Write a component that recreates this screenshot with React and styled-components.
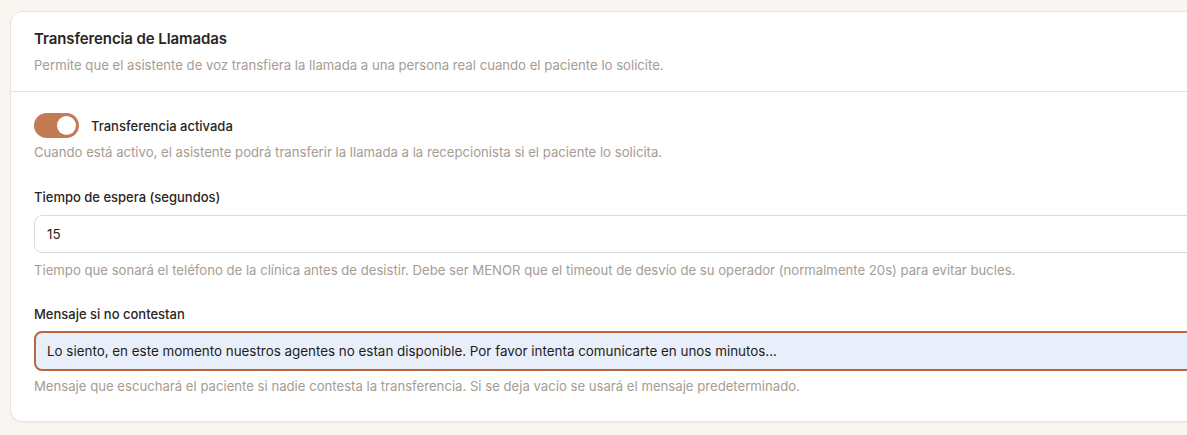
import React, { useState } from "react";
import styled, { createGlobalStyle } from "styled-components";

const Global = createGlobalStyle`
  html, body { margin: 0; padding: 0; background: #f9f6f1; }
  body { font-family: "Inter", "Noto Sans", sans-serif; -webkit-font-smoothing: antialiased; }
  * { box-sizing: border-box; }
`;

const Page = styled.div`
  padding: 11px 0 0 10px;
  width: 1187px;
  height: 435px;
  overflow: hidden;
`;

const Card = styled.section`
  width: 1260px;
  background: #ffffff;
  border: 1px solid #e7e3de;
  border-radius: 12px;
  box-shadow: 0 1px 2px rgba(60, 40, 20, 0.06);
`;

const Header = styled.header`
  padding: 17px 23px 17px;
  border-bottom: 1px solid #e6e1db;
  display: flex;
  flex-direction: column;
  gap: 7px;
`;

const Title = styled.h2`
  margin: 0;
  font-size: 15px;
  line-height: 20px;
  font-weight: 600;
  color: #2a2522;
  letter-spacing: -0.1px;
`;

const Helper = styled.p`
  margin: 0;
  font-size: 13.15px;
  line-height: 18px;
  color: #a69c93;
  margin-top: ${(p) => p.$mt || 0}px;
`;

const Body = styled.div`
  padding: 21px 23px 26px;
  display: flex;
  flex-direction: column;
`;

const Field = styled.div`
  display: flex;
  flex-direction: column;
  margin-top: ${(p) => p.$mt || 0}px;
`;

const ToggleRow = styled.label`
  display: flex;
  align-items: center;
  gap: 12px;
  cursor: pointer;
`;

const Switch = styled.span`
  width: 45px;
  height: 25px;
  border-radius: 13px;
  background: ${(p) => (p.$on ? "#c47a52" : "#d9d3cc")};
  display: flex;
  align-items: center;
  justify-content: ${(p) => (p.$on ? "flex-end" : "flex-start")};
  padding: 0 3px;
`;

const Knob = styled.span`
  width: 19px;
  height: 19px;
  border-radius: 50%;
  background: #ffffff;
`;

const ToggleLabel = styled.span`
  font-size: 13px;
  color: #2a2522;
  font-weight: 500;
`;

const Label = styled.label`
  font-size: 13px;
  line-height: 18px;
  font-weight: 500;
  color: #2a2522;
  margin-bottom: ${(p) => p.$mb || 10}px;
`;

const Input = styled.input`
  width: 100%;
  height: ${(p) => (p.$focused ? 40 : 38)}px;
  border-radius: 8px;
  border: ${(p) => (p.$focused ? "2px solid #b8673f" : "1px solid #dedad5")};
  background: ${(p) => (p.$focused ? "#e8effb" : "#ffffff")};
  padding: 0 ${(p) => (p.$focused ? 11 : 12)}px;
  font-family: inherit;
  font-size: 13.4px;
  color: #1f1b18;
  outline: none;
  margin-bottom: ${(p) => (p.$focused ? 6 : 8)}px;
`;

export default function App() {
  const [on, setOn] = useState(true);
  const [wait, setWait] = useState("15");
  const [msg, setMsg] = useState(
    "Lo siento, en este momento nuestros agentes no estan disponible. Por favor intenta comunicarte en unos minutos..."
  );
  return (
    <>
      <Global />
      <Page>
        <Card>
          <Header>
            <Title>Transferencia de Llamadas</Title>
            <Helper>
              Permite que el asistente de voz transfiera la llamada a una persona real cuando el paciente lo solicite.
            </Helper>
          </Header>
          <Body>
            <Field>
              <ToggleRow onClick={() => setOn(!on)}>
                <Switch $on={on}>
                  <Knob />
                </Switch>
                <ToggleLabel>Transferencia activada</ToggleLabel>
              </ToggleRow>
              <Helper $mt={5}>
                Cuando está activo, el asistente podrá transferir la llamada a la recepcionista si el paciente lo solicita.
              </Helper>
            </Field>
            <Field $mt={27}>
              <Label $mb={9}>Tiempo de espera (segundos)</Label>
              <Input value={wait} onChange={(e) => setWait(e.target.value)} />
              <Helper>
                Tiempo que sonará el teléfono de la clínica antes de desistir. Debe ser MENOR que el timeout de desvío de su operador (normalmente 20s) para evitar bucles.
              </Helper>
            </Field>
            <Field $mt={26}>
              <Label $mb={8}>Mensaje si no contestan</Label>
              <Input $focused value={msg} onChange={(e) => setMsg(e.target.value)} />
              <Helper>
                Mensaje que escuchará el paciente si nadie contesta la transferencia. Si se deja vacío se usará el mensaje predeterminado.
              </Helper>
            </Field>
          </Body>
        </Card>
      </Page>
    </>
  );
}
